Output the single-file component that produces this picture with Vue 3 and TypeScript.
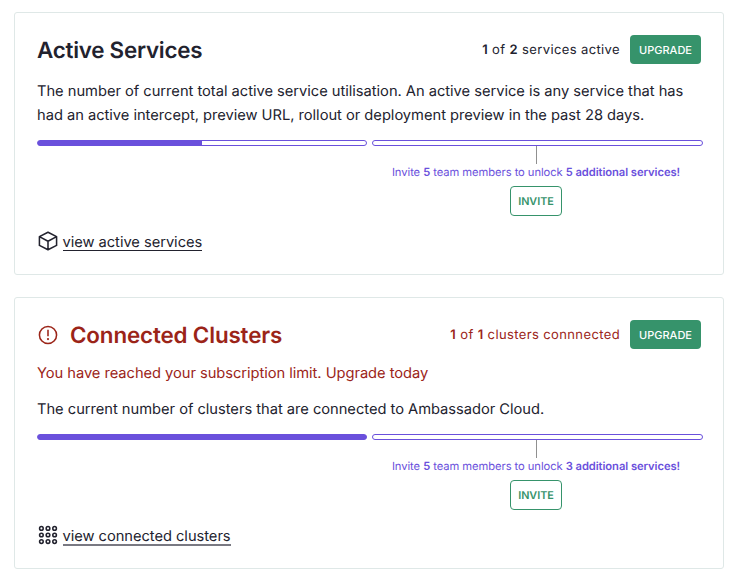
<script setup lang="ts">
interface UsageCard {
  id: string
  title: string
  used: number
  limit: number
  usageLabel: string
  warning?: string
  description: string
  bonus: number
  link: string
  icon: 'cube' | 'grid'
}

const cards: UsageCard[] = [
  {
    id: 'services',
    title: 'Active Services',
    used: 1,
    limit: 2,
    usageLabel: 'services active',
    description:
      'The number of current total active service utilisation. An active service is any service that has had an active intercept, preview URL, rollout or deployment preview in the past 28 days.',
    bonus: 5,
    link: 'view active services',
    icon: 'cube',
  },
  {
    id: 'clusters',
    title: 'Connected Clusters',
    used: 1,
    limit: 1,
    usageLabel: 'clusters connnected',
    warning: 'You have reached your subscription limit. Upgrade today',
    description: 'The current number of clusters that are connected to Ambassador Cloud.',
    bonus: 3,
    link: 'view connected clusters',
    icon: 'grid',
  },
]

const dots = [4, 10, 16]
const percent = (card: UsageCard): string => `${(card.used / card.limit) * 100}%`
</script>

<template>
  <main class="page">
    <section v-for="card in cards" :key="card.id" class="card" :class="[card.id, { limited: card.warning }]">
      <header class="head">
        <svg v-if="card.warning" class="alert" viewBox="0 0 20 20" aria-hidden="true">
          <circle cx="10" cy="10" r="7.8" />
          <path d="M10 5.2v5.9" />
          <circle class="point" cx="10" cy="13.7" r="1" />
        </svg>
        <h2>{{ card.title }}</h2>
        <p class="usage"><b>{{ card.used }}</b> of <b>{{ card.limit }}</b> {{ card.usageLabel }}</p>
        <button class="upgrade" type="button">UPGRADE</button>
      </header>

      <p v-if="card.warning" class="warning">{{ card.warning }}</p>
      <p class="description">{{ card.description }}</p>

      <div class="meters">
        <div class="meter used" :style="{ '--used': percent(card) }"></div>
        <div class="unlock">
          <div class="meter"></div>
          <div class="stem"></div>
          <p class="offer">Invite <b>5</b> team members to unlock <b>{{ card.bonus }} additional services!</b></p>
          <button class="invite" type="button">INVITE</button>
        </div>
      </div>

      <footer class="foot">
        <svg v-if="card.icon === 'cube'" class="icon" viewBox="0 0 20 20" aria-hidden="true">
          <path d="M10 2 17.8 6v8L10 18 2.2 14V6zM2.2 6 10 10.2 17.8 6M10 10.2V18" />
        </svg>
        <svg v-else class="icon" viewBox="0 0 20 20" aria-hidden="true">
          <template v-for="y in dots" :key="y">
            <circle v-for="x in dots" :key="x" :cx="x" :cy="y" r="1.65" />
          </template>
        </svg>
        <a class="link">{{ card.link }}</a>
      </footer>
    </section>
  </main>
</template>

<style>
body {
  background: #fff;
}
</style>

<style scoped>
.page {
  box-sizing: border-box;
  width: 746px;
  height: 575px;
  padding: 12px 22px 0 14px;
  display: flex;
  flex-direction: column;
  gap: 22px;
  font-family: Inter, sans-serif;
  text-rendering: geometricPrecision;
  color: #22222e;
}
.card {
  box-sizing: border-box;
  width: 710px;
  height: 263px;
  padding: 22px 20px 0 22px;
  border: 1px solid #dfe8e7;
  border-radius: 3px;
  display: flex;
  flex-direction: column;
}
.card.clusters {
  height: 272px;
}
h2,
p {
  margin: 0;
}
b {
  font-weight: 600;
}
.head {
  display: flex;
  align-items: center;
  height: 29px;
  padding-right: 2px;
}
.limited .head {
  color: #9b2418;
}
h2 {
  flex: 1;
  padding-top: 3px;
  font-size: 22.4px;
  line-height: 30px;
  font-weight: 600;
  letter-spacing: -0.25px;
}
.limited h2 {
  letter-spacing: -0.15px;
}
.alert {
  width: 22px;
  height: 22px;
  margin-right: 11px;
  fill: none;
  stroke: currentColor;
  stroke-width: 1.4;
}
.alert .point {
  fill: currentColor;
  stroke: none;
}
.usage {
  font-size: 13px;
  letter-spacing: 0.38px;
  margin-right: 10px;
  white-space: nowrap;
}
button {
  box-sizing: border-box;
  height: 29px;
  padding: 0;
  border-radius: 4px;
  font-family: inherit;
  font-size: 11px;
  text-rendering: inherit;
}
.upgrade {
  width: 71px;
  border: 0;
  background: #36936b;
  color: #fff;
  font-weight: 500;
}
.description,
.warning {
  font-size: 14.7px;
  line-height: 24px;
  letter-spacing: -0.025px;
}
.description {
  margin-top: 15px;
}
.warning {
  margin-top: 12px;
  color: #9b2418;
  letter-spacing: -0.045px;
}
.warning + .description {
  margin-top: 12px;
}
.meters {
  display: grid;
  grid-template-columns: 330px 331px;
  gap: 5px;
  margin-top: 13px;
}
.meter {
  box-sizing: border-box;
  height: 6px;
  width: 100%;
  border: 1px solid #6a50dc;
  border-radius: 3px;
}
.used {
  background: linear-gradient(#6a50dc, #6a50dc) left / var(--used) 100% no-repeat border-box;
}
.unlock {
  display: flex;
  flex-direction: column;
  align-items: center;
}
.stem {
  width: 1px;
  height: 18px;
  margin-right: 2px;
  background: #909090;
}
.offer {
  margin-right: 3px;
  font-size: 11.2px;
  letter-spacing: -0.06px;
  line-height: 17px;
  color: #6a50dc;
  white-space: nowrap;
}
.invite {
  width: 52px;
  height: 30px;
  margin: 5px 3px 0 0;
  border: 1px solid #36936b;
  background: #fff;
  color: #36936b;
  font-size: 10.8px;
  font-weight: 600;
}
.foot {
  display: flex;
  align-items: center;
  margin-top: 14px;
  height: 22px;
}
.icon {
  width: 22px;
  height: 22px;
  margin-right: 3.5px;
  fill: none;
  stroke: #22222e;
  stroke-width: 1.4;
  stroke-linejoin: round;
}
.link {
  height: 19px;
  line-height: 22px;
  font-size: 14.7px;
  letter-spacing: -0.04px;
  border-bottom: 1px solid #22222e;
}
.clusters .link {
  margin-top: 1px;
  border-bottom: 2px solid #797982;
}
</style>
